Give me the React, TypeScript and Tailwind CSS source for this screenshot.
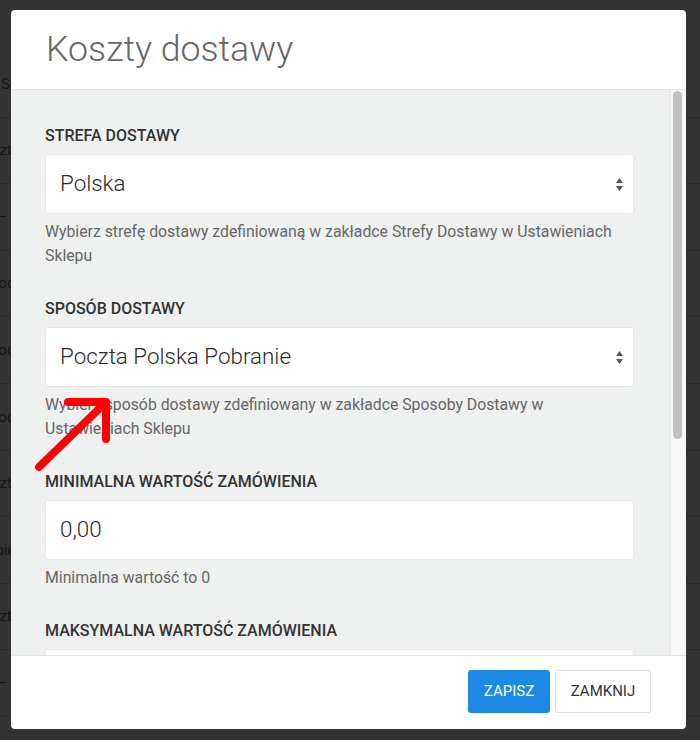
const backdropRows = [
  { text: 'Sposób', ml: 'ml-[1px]' },
  { text: 'Koszty', ml: 'ml-[-26px]' },
  { text: '–', ml: 'ml-[-3px]' },
  { text: 'Poczta', ml: 'ml-[-11px]' },
  { text: 'Poczta', ml: 'ml-[-11px]' },
  { text: 'Poczta', ml: 'ml-[-11px]' },
  { text: 'Koszty', ml: 'ml-[-26px]' },
  { text: 'Kupiec', ml: 'ml-[-22px]' },
  { text: 'Koszty', ml: 'ml-[-26px]' },
  { text: '–', ml: 'ml-[-3px]' },
];

function SelectArrows() {
  return (
    <svg width="7" height="13" viewBox="0 0 7 13" className="shrink-0">
      <polygon points="0,5 3.5,0 7,5" fill="#555" />
      <polygon points="0,8 3.5,13 7,8" fill="#555" />
    </svg>
  );
}

interface FieldProps {
  label: string;
  value: string;
  help?: string;
  select?: boolean;
}

function Field({ label, value, help, select = false }: FieldProps) {
  return (
    <div className="mb-[30px]">
      <div className="text-[16px] leading-[21px] font-medium uppercase text-[#333] mb-[8px]">{label}</div>
      <div className="h-[60px] bg-white border border-[#e6e7e7] rounded-[3px] flex items-center justify-between pl-[14px] pr-[10px]">
        <span className="text-[22.4px] font-light text-[#2a2a2a]">{value}</span>
        {select && <SelectArrows />}
      </div>
      {help && <p className="mt-[6px] text-[15.8px] leading-[24px] text-[#666]">{help}</p>}
    </div>
  );
}

export default function App() {
  return (
    <div className="relative w-[700px] h-[740px] overflow-hidden bg-[#333] font-['Roboto',sans-serif]">
      {/* dimmed page behind the modal */}
      <div className="flex flex-col pt-[51px]">
        {backdropRows.map((row, i) => (
          <div key={i} className="h-[66.6px] border-b border-[#2b2b2b] flex items-center overflow-hidden">
            <span className={`${row.ml} text-[15px] text-[#161616] whitespace-nowrap`}>{row.text}</span>
          </div>
        ))}
      </div>

      {/* modal */}
      <div className="absolute left-[11px] top-[10px] w-[675px] h-[719px] bg-white rounded-[4px] flex flex-col overflow-hidden">
        <div className="h-[80px] shrink-0 border-b border-[#e5e5e5] flex items-center px-[35px]">
          <h2 className="text-[35.7px] leading-none font-light text-[#666]">Koszty dostawy</h2>
        </div>

        <div className="flex flex-1 min-h-0 bg-[#eff0f0]">
          <div className="flex-1 min-w-0 overflow-hidden pt-[35px] pl-[34px] pr-[36px]">
            <Field
              label="Strefa dostawy"
              value="Polska"
              select
              help="Wybierz strefę dostawy zdefiniowaną w zakładce Strefy Dostawy w Ustawieniach Sklepu"
            />
            <Field
              label="Sposób dostawy"
              value="Poczta Polska Pobranie"
              select
              help="Wybierz sposób dostawy zdefiniowany w zakładce Sposoby Dostawy w Ustawieniach Sklepu"
            />
            <Field label="Minimalna wartość zamówienia" value="0,00" help="Minimalna wartość to 0" />
            <Field label="Maksymalna wartość zamówienia" value="" />
          </div>
          <div className="w-[16px] shrink-0 bg-[#f7f8f8] border-l border-[#e8e9e9]">
            <div className="mt-[1px] ml-[2px] w-[9px] h-[348px] rounded-full bg-[#c1c1c1]" />
          </div>
        </div>

        <div className="h-[74px] shrink-0 border-t border-[#e5e5e5] flex justify-end items-start gap-[5px] pt-[14px] pr-[35px]">
          <button className="h-[43px] w-[82px] rounded-[3px] bg-[#1e88e5] text-white text-[15px] uppercase">Zapisz</button>
          <button className="h-[43px] w-[96px] rounded-[3px] border border-[#dcdcdc] bg-white text-[#333] text-[15px] uppercase">
            Zamknij
          </button>
        </div>
      </div>

      {/* red annotation arrow */}
      <svg className="absolute inset-0 pointer-events-none" width="700" height="740" viewBox="0 0 700 740">
        <g stroke="#ff0000" strokeWidth="8" strokeLinecap="round" strokeLinejoin="round" fill="none">
          <line x1="39" y1="467" x2="105" y2="403" />
          <polyline points="68,402 106,402 106,439" />
        </g>
      </svg>
    </div>
  );
}
